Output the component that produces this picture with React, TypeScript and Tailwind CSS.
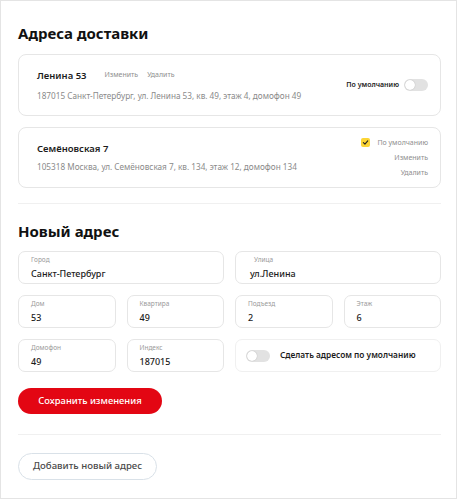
import React from "react";

const font = { fontFamily: '"Noto Sans", "Open Sans", sans-serif' };

const Toggle = () => (
  <span className="relative inline-block h-[12px] w-[24px] rounded-full bg-[#e2e2e2]">
    <span className="absolute left-[1px] top-[1px] h-[10px] w-[10px] rounded-full bg-white shadow-[0_0_1px_rgba(0,0,0,0.3)]" />
  </span>
);

const Field = ({ label, value }: { label: string; value: string }) => (
  <div className="flex h-[33px] flex-col justify-center rounded-[7px] border border-[#e6e6e6] bg-white pl-3">
    <span className="text-[6.5px] leading-[8px] text-[#9a9a9a]">{label}</span>
    <span className="mt-[4px] text-[9px] font-medium leading-[11px] text-[#1c1c1c]">{value}</span>
  </div>
);

export default function App() {
  return (
    <div style={font} className="h-[499px] w-[457px] border border-[#e4e4e4] bg-white pl-[17px] pr-[15px] pt-[21px]">
      <h2 className="h-[22px] text-[15px] font-bold leading-[22px] text-[#111]">Адреса доставки</h2>

      {/* Card 1 */}
      <div className="mt-[10px] flex h-[62px] items-center justify-between rounded-[8px] border border-[#e6e6e6] pl-[18px] pr-3">
        <div className="flex flex-col">
          <div className="flex items-center">
            <span className="text-[9.5px] font-semibold leading-[14px] text-[#1c1c1c]">Ленина 53</span>
            <span className="ml-[18px] text-[7px] text-[#8e8e8e]">Изменить</span>
            <span className="ml-[9px] text-[7px] text-[#8e8e8e]">Удалить</span>
          </div>
          <span className="mt-[7px] text-[8.2px] leading-[12px] text-[#8a8a8a]">
            187015 Санкт-Петербург, ул. Ленина 53, кв. 49, этаж 4, домофон 49
          </span>
        </div>
        <div className="flex items-center gap-[5px]">
          <span className="text-[7px] font-semibold text-[#1c1c1c]">По умолчанию</span>
          <Toggle />
        </div>
      </div>

      {/* Card 2 */}
      <div className="mt-[11px] flex h-[61px] items-center justify-between rounded-[8px] border border-[#e6e6e6] pl-[18px] pr-3">
        <div className="flex flex-col">
          <span className="text-[9.5px] font-semibold leading-[14px] text-[#1c1c1c]">Семёновская 7</span>
          <span className="mt-[5px] text-[8.2px] leading-[12px] text-[#8a8a8a]">
            105318 Москва, ул. Семёновская 7, кв. 134, этаж 12, домофон 134
          </span>
        </div>
        <div className="flex flex-col items-end text-[7px] leading-[15px] text-[#8e8e8e]">
          <div className="flex items-center gap-[7px]">
            <span className="flex h-[9px] w-[9px] items-center justify-center rounded-[2px] bg-[#fcd535]">
              <svg width="7" height="7" viewBox="0 0 10 10" fill="none">
                <path d="M2 5.2 4.2 7.3 8.2 2.8" stroke="#222" strokeWidth="1.6" strokeLinecap="round" strokeLinejoin="round" />
              </svg>
            </span>
            <span>По умолчанию</span>
          </div>
          <span>Изменить</span>
          <span>Удалить</span>
        </div>
      </div>

      <div className="mt-[15px] h-px bg-[#f0f0f0]" />

      <h2 className="mt-[16px] h-[22px] text-[15px] font-bold leading-[22px] text-[#111]">Новый адрес</h2>

      <div className="mt-[9px] grid grid-cols-2 gap-x-[11px]">
        <Field label="Город" value="Санкт-Петербург" />
        <div className="flex h-[33px] flex-col justify-center rounded-[7px] border border-[#e6e6e6] bg-white pl-3">
          <span className="pl-[6px] text-[6.5px] leading-[8px] text-[#9a9a9a]">Улица</span>
          <span className="mt-[4px] pl-[2px] text-[9px] font-medium leading-[11px] text-[#1c1c1c]">ул.Ленина</span>
        </div>
      </div>

      <div className="mt-[11px] grid grid-cols-4 gap-x-[11px]">
        <Field label="Дом" value="53" />
        <Field label="Квартира" value="49" />
        <Field label="Подъезд" value="2" />
        <Field label="Этаж" value="6" />
      </div>

      <div className="mt-[11px] grid grid-cols-4 gap-x-[11px]">
        <Field label="Домофон" value="49" />
        <Field label="Индекс" value="187015" />
        <div className="col-span-2 flex h-[33px] items-center rounded-[7px] border border-[#f0f0f0] pl-[10px]">
          <Toggle />
          <span className="ml-[10px] text-[8.3px] font-semibold text-[#1c1c1c]">Сделать адресом по умолчанию</span>
        </div>
      </div>

      <button className="mt-[16px] flex h-[26px] w-[144px] items-center justify-center rounded-full bg-[#e30613] text-[9.4px] font-medium text-white">
        Сохранить изменения
      </button>

      <div className="mt-[20px] h-px bg-[#f0f0f0]" />

      <button className="mt-[18px] flex h-[27px] w-[139px] items-center justify-center rounded-full border border-[#d9e1e8] text-[9.6px] font-medium text-[#4a4a4a]">
        Добавить новый адрес
      </button>
    </div>
  );
}
